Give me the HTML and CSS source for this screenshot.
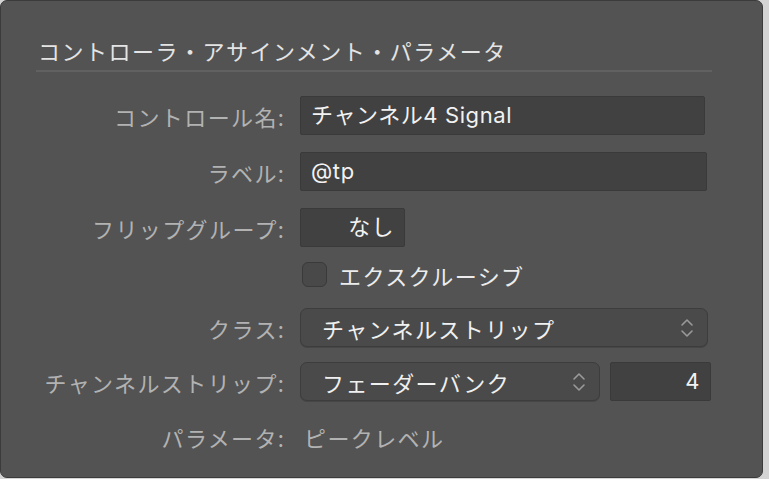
FILE: index.html
```html
<!DOCTYPE html>
<html lang="ja">
<head>
<meta charset="utf-8">
<title>コントローラ・アサインメント・パラメータ</title>
<link rel="stylesheet" href="styles.css">
</head>
<body>
<div class="panel">
  <h1 class="title">コントローラ・アサインメント・パラメータ</h1>
  <div class="sep"></div>
  <div class="form">
    <div class="row r1">
      <span class="label">コントロール名:</span>
      <div class="field wide">チャンネル4 Signal</div>
    </div>
    <div class="row r2">
      <span class="label">ラベル:</span>
      <div class="field wide2">@tp</div>
    </div>
    <div class="row r3">
      <span class="label">フリップグループ:</span>
      <div class="field small">なし</div>
    </div>
    <div class="row r4">
      <span class="label"></span>
      <div class="check"><span class="box"></span><span class="check-label">エクスクルーシブ</span></div>
    </div>
    <div class="row r5">
      <span class="label">クラス:</span>
      <div class="popup full">
        <span>チャンネルストリップ</span>
        <svg class="chev" width="14" height="24" viewBox="0 0 14 24"><path d="M2 9 L7 4 L12 9 M2 15 L7 20 L12 15" fill="none" stroke="#9a9a9a" stroke-width="1.6" stroke-linecap="round" stroke-linejoin="round"/></svg>
      </div>
    </div>
    <div class="row r6">
      <span class="label">チャンネルストリップ:</span>
      <div class="pair">
        <div class="popup mid">
          <span>フェーダーバンク</span>
          <svg class="chev" width="14" height="24" viewBox="0 0 14 24"><path d="M2 9 L7 4 L12 9 M2 15 L7 20 L12 15" fill="none" stroke="#9a9a9a" stroke-width="1.6" stroke-linecap="round" stroke-linejoin="round"/></svg>
        </div>
        <div class="field num">4</div>
      </div>
    </div>
    <div class="row r7">
      <span class="label">パラメータ:</span>
      <span class="value">ピークレベル</span>
    </div>
  </div>
</div>
</body>
</html>
```
FILE: styles.css
```css
html, body {
  margin: 0;
  padding: 0;
}
body {
  background: #d4d4d4;
  width: 769px;
  height: 479px;
  overflow: hidden;
  font-family: Inter, "Noto Sans CJK JP", sans-serif;
}
.panel {
  box-sizing: border-box;
  width: 763px;
  height: 478px;
  background: #535353;
  border: 1px solid #3b3b3b;
  border-radius: 7px;
}
.title {
  margin: 0;
  padding: 34px 0 0 37px;
  font-size: 22px;
  line-height: 30px;
  font-weight: normal;
  letter-spacing: 1.5px;
  color: #e4e4e4;
  font-family: "Noto Sans CJK JP", sans-serif;
}
.sep {
  margin: 5px 0 0 35px;
  width: 676px;
  height: 2px;
  background: #616161;
}
.form {
  display: flex;
  flex-direction: column;
}
.row {
  display: grid;
  grid-template-columns: 283px auto;
  column-gap: 16px;
  align-items: center;
}
.r1 { margin-top: 24px; }
.r2 { margin-top: 17px; }
.r3 { margin-top: 17px; }
.r4 { margin-top: 15px; }
.r5 { margin-top: 21px; }
.r6 { margin-top: 15px; }
.r7 { margin-top: 18px; height: 36px; }
.label {
  text-align: right;
  font-size: 22px;
  letter-spacing: 1.4px;
  margin-right: -1.4px;
  color: #b2b2b2;
  font-family: "Noto Sans CJK JP", sans-serif;
  white-space: nowrap;
}
.field {
  box-sizing: border-box;
  height: 39px;
  background: #414141;
  border: 1px solid #3a3a3a;
  border-radius: 2px;
  color: #f2f2f2;
  font-size: 22px;
  line-height: 37px;
  letter-spacing: 0.6px;
  padding: 0 10px;
  white-space: nowrap;
}
.wide { width: 405px; }
.wide2 { width: 407px; }
.small { width: 105px; text-align: right; padding-right: 9px; letter-spacing: 1.4px; }
.num { width: 101px; text-align: right; padding-right: 10px; }
.check {
  display: flex;
  align-items: center;
  gap: 12px;
  height: 25px;
  padding-left: 2px;
}
.box {
  box-sizing: border-box;
  width: 25px;
  height: 25px;
  border-radius: 6px;
  background: #494949;
  border: 1px solid #3a3a3a;
}
.check-label {
  font-size: 22px;
  letter-spacing: 1.4px;
  color: #ececec;
  font-family: "Noto Sans CJK JP", sans-serif;
}
.popup {
  box-sizing: border-box;
  height: 39px;
  background: #4a4a4a;
  border: 1px solid #3d3d3d;
  border-radius: 7px;
  box-shadow: 0 1px 0 #464646;
  display: flex;
  align-items: center;
  justify-content: space-between;
  padding: 0 13px 0 21px;
  color: #f0f0f0;
  font-size: 22px;
  letter-spacing: 1.4px;
  font-family: "Noto Sans CJK JP", sans-serif;
}
.full { width: 408px; }
.mid { width: 300px; }
.pair {
  display: flex;
  gap: 10px;
}
.value {
  font-size: 22px;
  letter-spacing: 1.4px;
  color: #b2b2b2;
  font-family: "Noto Sans CJK JP", sans-serif;
  padding-left: 4px;
}
```
